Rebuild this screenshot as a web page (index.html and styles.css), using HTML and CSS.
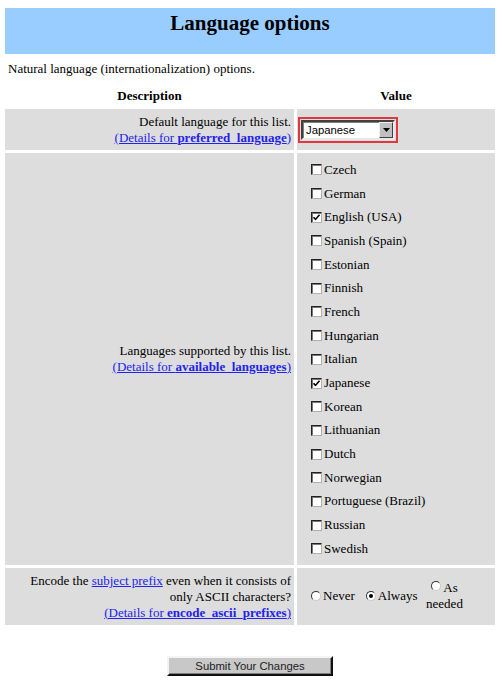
FILE: index.html
```html
<!DOCTYPE html>
<html lang="en">
<head>
<meta charset="utf-8">
<title>Language options</title>
<link rel="stylesheet" href="styles.css">
</head>
<body>
<div class="banner"><h1 class="title">Language options</h1></div>
<p class="intro">Natural language (internationalization) options.</p>
<div class="options">
  <div class="head">Description</div>
  <div class="head">Value</div>

  <div class="desc"><div class="desc-inner">Default language for this list.<br><a href="#">(Details for <b>preferred_language</b>)</a></div></div>
  <div class="val val-select">
    <span class="select-wrap">
      <span class="select"><span class="select-text">Japanese</span><span class="select-btn"><svg width="7" height="4" viewBox="0 0 7 4"><path d="M0 0h7L3.5 4z" fill="#000"/></svg></span></span>
    </span>
  </div>

  <div class="desc"><div class="desc-inner">Languages supported by this list.<br><a href="#">(Details for <b>available_languages</b>)</a></div></div>
  <div class="val val-list">
    <div class="cb-item"><span class="cb"></span>Czech</div>
    <div class="cb-item"><span class="cb"></span>German</div>
    <div class="cb-item"><span class="cb checked"><svg width="9" height="9" viewBox="0 0 9 9"><path d="M1.5 4.2l2 2.2 4-4.6" fill="none" stroke="#000" stroke-width="1.6"/></svg></span>English (USA)</div>
    <div class="cb-item"><span class="cb"></span>Spanish (Spain)</div>
    <div class="cb-item"><span class="cb"></span>Estonian</div>
    <div class="cb-item"><span class="cb"></span>Finnish</div>
    <div class="cb-item"><span class="cb"></span>French</div>
    <div class="cb-item"><span class="cb"></span>Hungarian</div>
    <div class="cb-item"><span class="cb"></span>Italian</div>
    <div class="cb-item"><span class="cb checked"><svg width="9" height="9" viewBox="0 0 9 9"><path d="M1.5 4.2l2 2.2 4-4.6" fill="none" stroke="#000" stroke-width="1.6"/></svg></span>Japanese</div>
    <div class="cb-item"><span class="cb"></span>Korean</div>
    <div class="cb-item"><span class="cb"></span>Lithuanian</div>
    <div class="cb-item"><span class="cb"></span>Dutch</div>
    <div class="cb-item"><span class="cb"></span>Norwegian</div>
    <div class="cb-item"><span class="cb"></span>Portuguese (Brazil)</div>
    <div class="cb-item"><span class="cb"></span>Russian</div>
    <div class="cb-item"><span class="cb"></span>Swedish</div>
  </div>

  <div class="desc desc-tall"><div class="desc-inner">Encode the <a href="#">subject prefix</a> even when it consists of only ASCII characters?<br><a href="#">(Details for <b>encode_ascii_prefixes</b>)</a></div></div>
  <div class="val val-radios">
    <span class="rb-item"><span class="rb"></span>Never</span>
    <span class="rb-item"><span class="rb checked"></span>Always</span>
    <span class="rb-item rb-narrow"><span class="rb"></span>As needed</span>
  </div>
</div>
<div class="submit-row"><span class="submit">Submit Your Changes</span></div>
</body>
</html>
```

FILE: styles.css
```css
html, body {
  background: #ffffff;
}
body {
  margin: 8px 5px 0 5px;
  font-family: "Liberation Serif", "Times New Roman", serif;
  font-size: 13px;
  line-height: 16px;
  color: #000;
  width: 490px;
}
.banner {
  background: #99ccff;
  height: 46px;
  box-sizing: border-box;
  padding-top: 3px;
  text-align: center;
}
.title {
  margin: 0;
  font-size: 21px;
  line-height: 24px;
  font-weight: bold;
}
.intro {
  margin: 7px 0 0 3px;
}
.options {
  margin-top: 8px;
  display: grid;
  grid-template-columns: 289px 198px;
  gap: 3px;
}
.head {
  text-align: center;
  font-weight: bold;
  padding: 3px 0 2px;
}
.desc {
  background: #dddddd;
  text-align: right;
  padding: 4px 3px 4px 8px;
  display: flex;
  align-items: center;
  justify-content: flex-end;
}
.desc-tall {
  padding: 5px 3px 4px 8px;
}
.desc-inner {
  display: block;
}
a {
  color: #2222ee;
  text-decoration: underline;
}
.val {
  background: #dddddd;
}
.val-select {
  padding: 8px 0 7px 1px;
  display: flex;
  align-items: center;
}
.select-wrap {
  display: inline-block;
  border: 2px solid #e0383c;
  padding: 1px;
}
.select {
  display: flex;
  align-items: center;
  width: 94px;
  height: 20px;
  box-sizing: border-box;
  background: #fff;
  border: 2px solid;
  border-color: #404040 #e8e8e8 #e8e8e8 #404040;
  box-shadow: inset 1px 1px 0 #808080;
  font-family: "Liberation Sans", Arial, sans-serif;
  font-size: 11.3px;
  line-height: 14px;
}
.select-text {
  flex: 1;
  padding-left: 3px;
}
.select-btn {
  width: 14px;
  height: 16px;
  box-sizing: border-box;
  background: #c0c0c0;
  border: 1px solid;
  border-color: #eeeeee #404040 #404040 #eeeeee;
  display: flex;
  align-items: center;
  justify-content: center;
}
.val-list {
  padding: 5px 0 4px 14px;
}
.cb-item {
  height: 23.7px;
  display: flex;
  align-items: center;
}
.cb {
  width: 11px;
  height: 11px;
  box-sizing: border-box;
  background: #fff;
  border: 1px solid;
  border-color: #222 #b0b0b0 #b0b0b0 #222;
  box-shadow: inset 1px 1px 0 #777;
  margin-right: 2px;
  display: flex;
  align-items: center;
  justify-content: center;
  flex: none;
}
.cb svg {
  display: block;
}
.val-radios {
  display: flex;
  align-items: center;
  padding-left: 14px;
}
.rb-item {
  display: inline-flex;
  align-items: center;
}
.rb-item + .rb-item {
  margin-left: 11px;
}
.rb-item.rb-narrow {
  display: block;
  width: 42px;
  text-align: center;
  margin-left: 6px;
}
.rb {
  display: inline-block;
  width: 10px;
  height: 10px;
  box-sizing: border-box;
  border-radius: 50%;
  background: #fff;
  border: 1px solid;
  border-color: #333 #c8c8c8 #c8c8c8 #333;
  margin-right: 2px;
  position: relative;
  vertical-align: 1px;
}
.rb.checked::after {
  content: "";
  position: absolute;
  left: 2px;
  top: 2px;
  width: 4px;
  height: 4px;
  border-radius: 50%;
  background: #000;
}
.submit-row {
  text-align: center;
  margin-top: 31px;
}
.submit {
  display: inline-block;
  width: 166px;
  height: 20px;
  box-sizing: border-box;
  background: #c8c8c8;
  border: 2px solid;
  border-color: #f4f4f4 #101010 #101010 #f4f4f4;
  box-shadow: inset -1px -1px 0 #808080;
  font-family: "Liberation Sans", Arial, sans-serif;
  font-size: 11.3px;
  line-height: 16px;
  color: #222;
}
```
